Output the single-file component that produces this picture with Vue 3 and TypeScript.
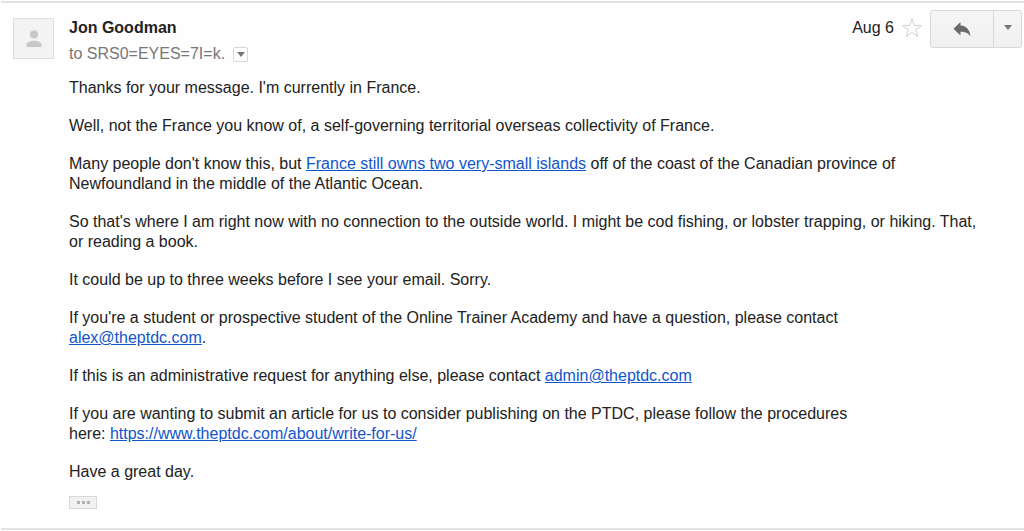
<script setup lang="ts">
interface Part {
  text: string
  href?: string
}

const paragraphs: Part[][] = [
  [{ text: "Thanks for your message. I'm currently in France." }],
  [{ text: 'Well, not the France you know of, a self-governing territorial overseas collectivity of France.' }],
  [
    { text: "Many people don't know this, but " },
    { text: 'France still owns two very-small islands', href: '#islands' },
    { text: ' off of the coast of the Canadian province of Newfoundland in the middle of the Atlantic Ocean.' },
  ],
  [{ text: "So that's where I am right now with no connection to the outside world. I might be cod fishing, or lobster trapping, or hiking. That, or reading a book." }],
  [{ text: 'It could be up to three weeks before I see your email. Sorry.' }],
  [
    { text: "If you're a student or prospective student of the Online Trainer Academy and have a question, please contact " },
    { text: 'alex@theptdc.com', href: 'mailto:alex@theptdc.com' },
    { text: '.' },
  ],
  [
    { text: 'If this is an administrative request for anything else, please contact ' },
    { text: 'admin@theptdc.com', href: 'mailto:admin@theptdc.com' },
  ],
  [
    { text: 'If you are wanting to submit an article for us to consider publishing on the PTDC, please follow the procedures here:\u00a0' },
    { text: 'https://www.theptdc.com/about/write-for-us/', href: 'https://www.theptdc.com/about/write-for-us/' },
  ],
  [{ text: 'Have a great day.' }],
]
</script>

<template>
  <article class="message">
    <div class="avatar">
      <svg width="16" height="18" viewBox="0 0 16 18" aria-hidden="true">
        <circle cx="8" cy="4.5" r="4" fill="#c8c8c8" />
        <path d="M0.5 17v-2.3C0.5 12 5 10.8 8 10.8s7.500 1.200 7.500 3.900V17z" fill="#c8c8c8" />
      </svg>
    </div>
    <div class="main">
      <header class="head">
        <div class="who">
          <h1 class="sender">Jon Goodman</h1>
          <div class="recipient">
            <span>to SRS0=EYES=7I=k.</span>
            <button class="details" type="button" aria-label="Show details">
              <svg width="8" height="5" viewBox="0 0 8 5"><path d="M0 0h8L4 5z" fill="#777" /></svg>
            </button>
          </div>
        </div>
        <div class="tools">
          <time class="date">Aug 6</time>
          <button class="star" type="button" aria-label="Star message">
            <svg width="20" height="20" viewBox="0 0 20 20">
              <path d="M10 1l2.300 6.500 7 .1-5.600 4.200 2.100 6.700L10 14.500l-5.800 4 2.100-6.700L.7 7.600l7-.1z" fill="#fff" stroke="#d0d0d0" />
            </svg>
          </button>
          <div class="split">
            <button class="reply" type="button" aria-label="Reply">
              <svg width="18" height="15" viewBox="0 0 18 15">
                <path d="M7.500 0v3.500C13 3.800 16.800 7.500 17.500 14.500 15 10.800 12 9.800 7.500 9.800V13.500L0.500 6.700z" fill="#6a6a6a" />
              </svg>
            </button>
            <button class="more" type="button" aria-label="More">
              <svg width="8" height="5" viewBox="0 0 8 5"><path d="M0 0h8L4 5z" fill="#777" /></svg>
            </button>
          </div>
        </div>
      </header>
      <div class="body">
        <p v-for="(parts, i) in paragraphs" :key="i">
          <template v-for="(part, j) in parts" :key="j"><a v-if="part.href" :href="part.href">{{ part.text }}</a><template v-else>{{ part.text }}</template></template>
        </p>
      </div>
      <button class="trimmed" type="button" aria-label="Show trimmed content">
        <i></i><i></i><i></i>
      </button>
    </div>
  </article>
</template>

<style>
body {
  margin: 0;
  background: #fefefe;
}
</style>

<style scoped>
.message {
  display: flex;
  gap: 15px;
  margin: 1px 0 0 1px;
  padding: 15px 2px 19px 12px;
  border-top: 2px solid #e2e2e2;
  border-bottom: 2px solid #e2e2e2;
  font: 16px/20px "Liberation Sans", Arial, sans-serif;
  color: #222;
}
button {
  display: flex;
  align-items: center;
  justify-content: center;
  box-sizing: border-box;
  margin: 0;
  padding: 0;
  border: 0;
  background: none;
  cursor: pointer;
}
.avatar {
  display: flex;
  flex: none;
  align-items: center;
  justify-content: center;
  box-sizing: border-box;
  width: 41px;
  height: 41px;
  border: 1px solid #dfdfdf;
  background: #f3f3f3;
}
.main {
  flex: 1;
  min-width: 0;
}
.head {
  display: flex;
  justify-content: space-between;
}
.sender {
  margin: 0;
  font-size: 16px;
  line-height: 20px;
  font-weight: bold;
}
.recipient {
  display: flex;
  align-items: center;
  gap: 8px;
  margin-top: 6px;
  color: #777;
}
.details {
  width: 15px;
  height: 15px;
  border: 1px solid #d8d8d8;
  border-radius: 2px;
  background: #fff;
}
.tools {
  display: flex;
  align-items: flex-start;
}
.date {
  margin-right: 8px;
}
.star {
  width: 20px;
  height: 20px;
  margin-right: 8px;
}
.split {
  display: flex;
  box-sizing: border-box;
  height: 38px;
  margin-top: -8px;
  border: 1px solid #d8d8d8;
  border-radius: 3px;
  background: linear-gradient(#f6f6f6, #f0f0f0);
}
.reply {
  width: 62px;
}
.more {
  width: 28px;
  padding-bottom: 4px;
  border-left: 1px solid #d8d8d8;
}
.body {
  margin-top: 14px;
  padding-right: 44px;
}
.body p {
  margin: 0 0 18px;
}
.body p:last-child {
  margin-bottom: 0;
}
.body a {
  color: #15c;
  text-decoration: underline;
}
.trimmed {
  gap: 2px;
  width: 28px;
  height: 13px;
  margin-top: 14px;
  border: 1px solid #d8d8d8;
  background: #f1f1f1;
}
.trimmed i {
  width: 3px;
  height: 3px;
  background: #b0b0b0;
}
</style>
